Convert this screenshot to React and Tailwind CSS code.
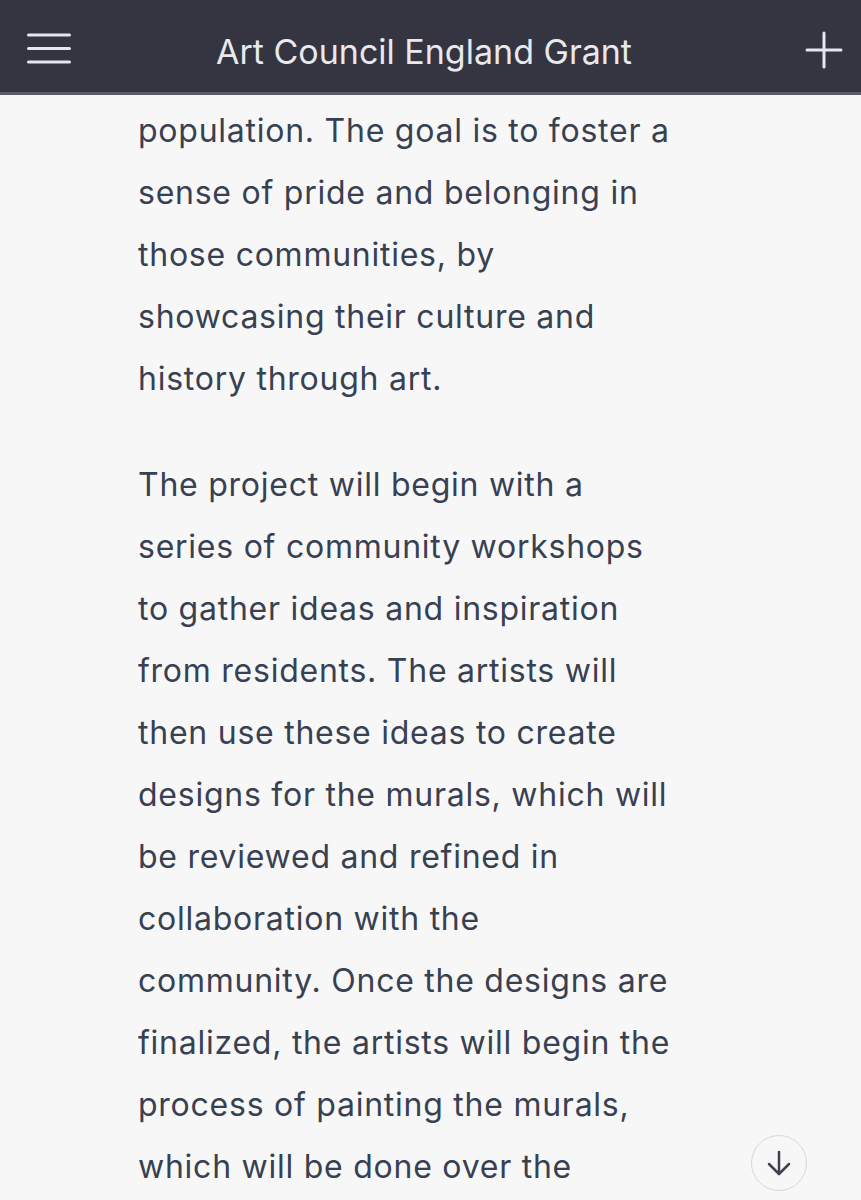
import React from "react";

const p1 = [
  "population. The goal is to foster a",
  "sense of pride and belonging in",
  "those communities, by",
  "showcasing their culture and",
  "history through art.",
];
const p2 = [
  "The project will begin with a",
  "series of community workshops",
  "to gather ideas and inspiration",
  "from residents. The artists will",
  "then use these ideas to create",
  "designs for the murals, which will",
  "be reviewed and refined in",
  "collaboration with the",
  "community. Once the designs are",
  "finalized, the artists will begin the",
  "process of painting the murals,",
  "which will be done over the",
];

function Para({ lines, className }) {
  return (
    <p className={className}>
      {lines.map((l, i) => (
        <React.Fragment key={i}>
          {l}
          {i < lines.length - 1 && <br />}
        </React.Fragment>
      ))}
    </p>
  );
}

export default function App() {
  return (
    <div
      className="relative h-[1200px] w-[861px] overflow-hidden bg-[#f7f7f8]"
      style={{ fontFamily: "Inter, 'Noto Sans', sans-serif" }}
    >
      <header className="flex h-[95px] items-center border-b-[3px] border-[#5b5c68] bg-[#343541] pl-[27px] pr-[27px]">
        <div className="flex w-[80px] items-center">
          <svg width="44" height="32" viewBox="0 0 44 32" className="mt-[5px]">
            <g stroke="#e6e6ee" strokeWidth="3" strokeLinecap="round">
              <line x1="1.5" y1="2" x2="42.5" y2="2" />
              <line x1="1.5" y1="15.5" x2="42.5" y2="15.5" />
              <line x1="1.5" y1="29" x2="42.5" y2="29" />
            </g>
          </svg>
        </div>
        <h1 className="mt-[11px] flex-1 pr-[13px] text-center text-[34px] font-normal leading-none text-[#e8e8ef]">
          Art Council England Grant
        </h1>
        <div className="flex w-[80px] items-center justify-end">
          <svg width="38" height="38" viewBox="0 0 38 38" className="mr-[-9px] mt-[7px]">
            <g stroke="#e6e6ee" strokeWidth="3" strokeLinecap="round">
              <line x1="19" y1="2" x2="19" y2="36" />
              <line x1="2" y1="19" x2="36" y2="19" />
            </g>
          </svg>
        </div>
      </header>
      <main className="pl-[138px] pt-[5px] text-[32px] leading-[62px] tracking-[0.75px] text-[#374151]">
        <Para lines={p1} className="mb-[44px]" />
        <Para lines={p2} />
      </main>
      <button className="absolute left-[751px] top-[1135px] flex h-[56px] w-[56px] items-center justify-center rounded-full border-[1.5px] border-[#d6d6de] bg-[#f7f7f8]">
        <svg width="28" height="28" viewBox="0 0 28 28">
          <g stroke="#40414f" strokeWidth="2.5" strokeLinecap="round" strokeLinejoin="round" fill="none">
            <line x1="14" y1="3" x2="14" y2="25" />
            <polyline points="4,15 14,25 24,15" />
          </g>
        </svg>
      </button>
    </div>
  );
}
